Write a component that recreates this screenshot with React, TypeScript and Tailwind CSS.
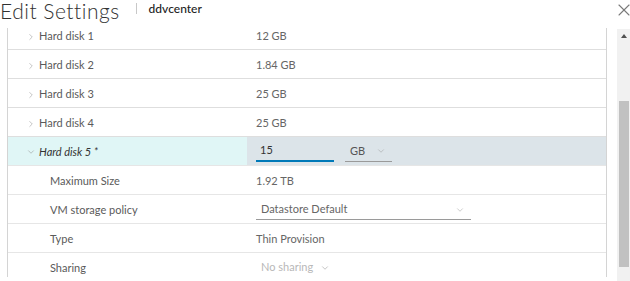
import { ChevronDown, ChevronRight, X } from "lucide-react";

const font = { fontFamily: "Lato, 'Open Sans', sans-serif" };

type Row = { label: string; value: string };

const disks: Row[] = [
  { label: "Hard disk 1", value: "12 GB" },
  { label: "Hard disk 2", value: "1.84 GB" },
  { label: "Hard disk 3", value: "25 GB" },
  { label: "Hard disk 4", value: "25 GB" },
];

function DiskRow({ label, value }: Row) {
  return (
    <div className="flex h-[29px] items-center border-b border-[#dedede] pt-[3px]">
      <div className="flex w-[239px] items-center pl-[18px] text-[#5a5a5a]">
        <ChevronRight size={10} strokeWidth={1.2} className="mr-[3px] text-[#8a8a8a]" />
        <span>{label}</span>
      </div>
      <div className="pl-[9px] text-[#666]">{value}</div>
    </div>
  );
}

function SubRow({ label, children }: { label: string; children: React.ReactNode }) {
  return (
    <div className="flex h-[29px] items-center border-b border-[#e6e6e6] pt-[2px]">
      <div className="w-[239px] pl-[42px] text-[#5a5a5a]">{label}</div>
      <div className="pl-[9px] text-[#666]">{children}</div>
    </div>
  );
}

function Select({ text, width, muted }: { text: string; width: string; muted?: boolean }) {
  return (
    <div
      className={`flex h-[20px] items-center justify-between border-b pl-[5px] pr-[6px] ${width} ${
        muted ? "border-[#d6d6d6] text-[#b8b8b8]" : "border-[#9a9a9a] text-[#666]"
      }`}
    >
      <span>{text}</span>
      <ChevronDown size={10} strokeWidth={1.2} className={muted ? "text-[#8a8a8a]" : "text-[#9a9a9a]"} />
    </div>
  );
}

export default function App() {
  return (
    <div className="h-[281px] w-[630px] overflow-hidden bg-white text-[11px]" style={font}>
      {/* Header */}
      <div className="flex h-[28px] items-start">
        <h1 className="text-[21px] leading-[22px] font-light tracking-[0.5px] text-[#313131]">Edit Settings</h1>
        <div className="ml-[16px] mt-[3px] h-[11px] w-px bg-[#c8c8c8]" />
        <div className="ml-[12px] mt-[2px] text-[12px] leading-[14px] font-medium text-[#222]">ddvcenter</div>
        <X size={20} strokeWidth={1.3} className="ml-auto -mr-[4px] text-[#7a7a7a]" />
      </div>

      <div className="flex h-[253px]">
        {/* Table */}
        <div className="ml-[7px] h-[249px] w-[600px] overflow-hidden border-x border-[#d4d4d4]">
          <div className="-mt-[7px]">
            {disks.map((d) => (
              <DiskRow key={d.label} {...d} />
            ))}
            <div className="flex h-[29px] items-stretch border-b border-[#e6e6e6]">
              <div className="flex w-[239px] items-center bg-[#e0f6f6] pl-[18px] pt-[2px] text-[#333]">
                <ChevronDown size={10} strokeWidth={1.2} className="mr-[3px] text-[#8a8a8a]" />
                <span className="italic">Hard disk 5 *</span>
              </div>
              <div className="flex flex-1 items-center bg-[#dce4e9] pl-[9px] pt-[1px]">
                <div className="flex h-[20px] w-[78px] items-center border-b-2 border-[#0079b8] pl-[4px] text-[#333]">
                  15
                </div>
                <div className="ml-[11px] flex h-[20px] w-[47px] items-center justify-between border-b border-[#9a9a9a] pl-[5px] pr-[6px] text-[#555]">
                  <span>GB</span>
                  <ChevronDown size={10} strokeWidth={1.2} className="text-[#9a9a9a]" />
                </div>
              </div>
            </div>
            <SubRow label="Maximum Size">1.92 TB</SubRow>
            <SubRow label="VM storage policy">
              <Select text="Datastore Default" width="w-[215px]" />
            </SubRow>
            <SubRow label="Type">Thin Provision</SubRow>
            <SubRow label="Sharing">
              <Select text="No sharing" width="w-[80px]" muted />
            </SubRow>
          </div>
        </div>

        {/* Scrollbar */}
        <div className="ml-[10px] mt-[1px] flex w-[13px] flex-col items-center bg-[#f1f1f1]">
          <div className="mt-[5px] h-0 w-0 border-x-[3px] border-b-[4px] border-x-transparent border-b-[#505050]" />
          <div className="mt-[63px] h-[166px] w-[10px] bg-[#c1c1c1]" />
        </div>
      </div>
    </div>
  );
}
